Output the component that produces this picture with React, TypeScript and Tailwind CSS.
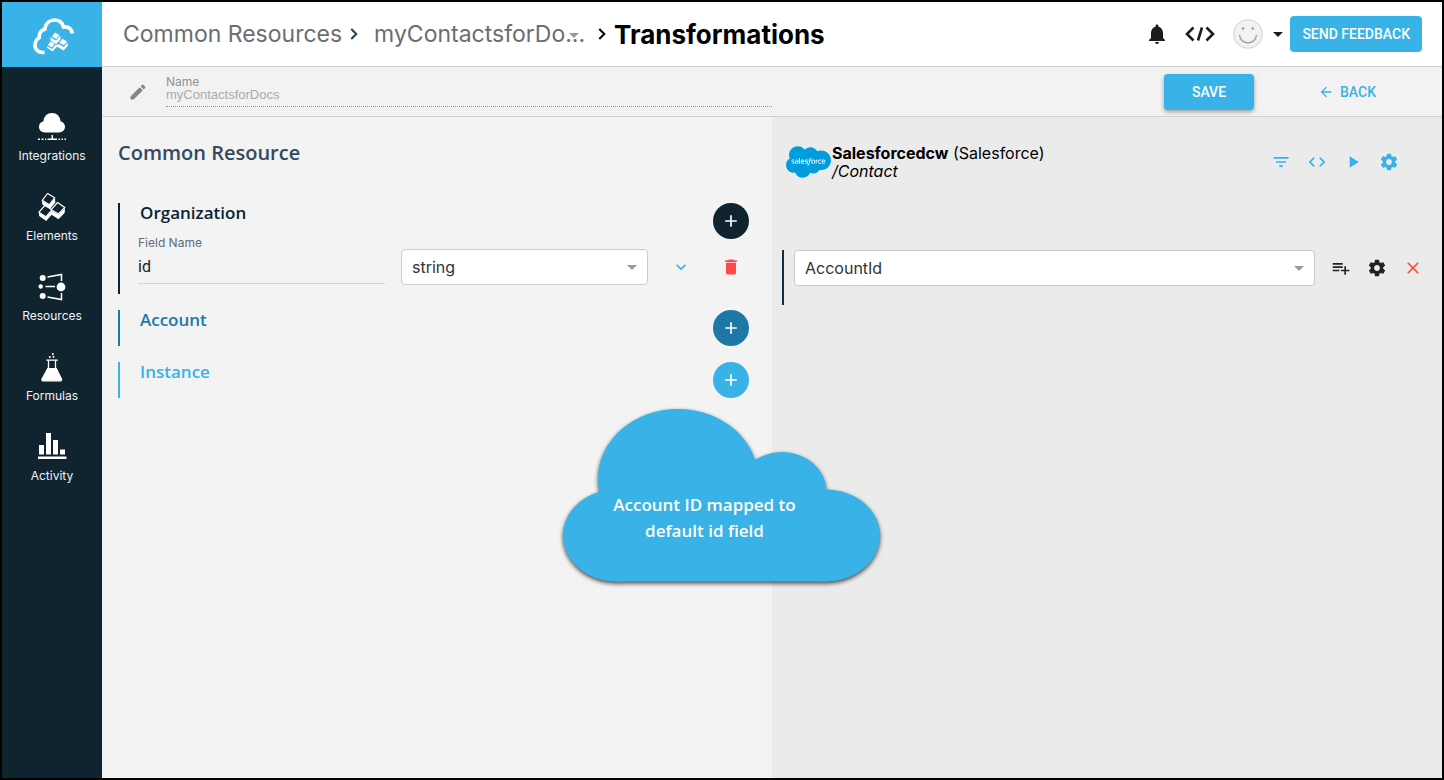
import type { ReactNode } from "react";
import {
  MdAdd,
  MdArrowBack,
  MdArrowDropDown,
  MdClose,
  MdCode,
  MdDelete,
  MdEdit,
  MdExpandMore,
  MdFilterList,
  MdNotifications,
  MdPlayArrow,
} from "react-icons/md";
import { FaSalesforce } from "react-icons/fa";

function BrandLogo() {
  return (
    <svg width="42" height="38" viewBox="0 0 42 38" aria-hidden="true">
      <path
        d="M11.500 34.300C5.500 35.200 1.800 31.500 2 27c.2-4 3-6.500 4.200-7.200C6 14.500 9 12 11.800 11.300 12.500 5 17 2 21.500 2c5 0 8 3 9 7 5-.5 8 2 8.800 6.500"
        fill="none"
        stroke="#fff"
        strokeWidth="3.600"
      />
      <g fill="#fff">
        <path d="M22 14.500l4.300 2.500-3 3.900-4.300-2.500z" />
        <path d="M17.600 19.300l5.500 3.100 4-5 .6 3.600-4.400 5-5.900-3.700z" />
        <path d="M17.800 23.300l4 2.500-2.800 3.600-4.100-2.500z" />
        <path d="M14.200 28l4.900 2.900 3.800-4.700 2.200 1.300-5.600 6-5.400-3.700z" />
        <path d="M29.500 20.700l4.500 2.800-3.200 3.800-4.600-2.800z" />
        <path d="M25.200 25.800l5.600 3.200 3.900-4.700.1 3.500-4.200 4.700-6.800-4z" />
      </g>
    </svg>
  );
}

function IntegrationsIcon() {
  return (
    <svg width="30" height="30" viewBox="0 0 30 30" fill="#fff" aria-hidden="true">
      <path d="M8 20.500C4.300 20.500 2 18 2 14.800c0-2.800 1.700-4.800 4.500-5.500C6.800 4.300 10.300 1 15 1s8.200 3.300 8.500 8.300c2.500.7 4.500 2.800 4.500 5.500 0 3.200-2.500 5.700-6 5.700z" />
      <path d="M14.500 23H16v3.500h-1.500zM10.500 26.500H20V28h-9.500zM1 26.500h2V28H1zM4.500 26.500h2V28h-2zM8 26.500h1.200V28H8zM21.500 26.500H23V28h-1.500zM24.500 26.500H26V28h-1.500zM27.500 26.500H29V28h-1.500z" />
    </svg>
  );
}

function ElementsIcon() {
  return (
    <svg width="30" height="30" viewBox="0 0 30 30" aria-hidden="true">
      <g fill="#fff">
        <path d="M5 8.500l7 4.500 6-7 .3 4.500-5.600 7-7.400-5z" />
        <path d="M1.800 20.500l7 4.700L15 18.500v3.800L9.200 29l-7-5z" />
        <path d="M14 18.500l7.500 4 6.500-6.200-.3 4.500-6.200 6.400-7-4.400z" />
      </g>
      <g fill="#102430" stroke="#fff" strokeWidth="1.200" strokeLinejoin="round">
        <path d="M10.500 1.500l7.200 4.300-5.500 7-7-4.500z" />
        <path d="M7.800 13.500l7.200 4.300-6.200 7-7-4.500z" />
        <path d="M20.500 10.500l7.300 5-6.300 6.500-7.300-4.300z" />
      </g>
    </svg>
  );
}

function ResourcesIcon() {
  return (
    <svg width="30" height="30" viewBox="0 0 30 30" aria-hidden="true">
      <g fill="#fff">
        <circle cx="5.700" cy="6" r="3" />
        <circle cx="3.700" cy="14.500" r="2.200" />
        <circle cx="5.700" cy="24" r="3" />
        <circle cx="24" cy="15" r="4.400" />
      </g>
      <path
        d="M10.500 5L24.500 2.500V9M8.500 14.500h9.500M10.500 25L24.500 27.500V21"
        fill="none"
        stroke="#fff"
        strokeWidth="1.500"
      />
    </svg>
  );
}

function FormulasIcon() {
  return (
    <svg width="30" height="30" viewBox="0 0 30 30" aria-hidden="true">
      <path
        d="M11.500 8.500v7L5 27c-.4.900.1 1.800 1 1.800h17.500c.9 0 1.400-.9 1-1.800L18.500 15.500v-7"
        fill="none"
        stroke="#fff"
        strokeWidth="1.300"
      />
      <path d="M10.500 16h9.200l5 11.500c0 1-.4 1.300-1.200 1.300H6c-.9 0-1.300-.6-1-1.500z" fill="#fff" />
      <path d="M9.300 7.500h11.500v1.300H9.300z" fill="#fff" />
      <circle cx="12.800" cy="5" r="1" fill="#fff" />
      <circle cx="16.500" cy="4.800" r="1" fill="#fff" />
      <circle cx="15.800" cy="2" r="1" fill="#fff" />
    </svg>
  );
}

function ActivityIcon() {
  return (
    <svg width="30" height="30" viewBox="0 0 30 30" fill="#fff" aria-hidden="true">
      <path d="M2 13h5v9.500H2zM9 1h5v21.500H9zM16 8h5v14.500h-5zM23 17.500h5v5h-5zM1 24.500h28.500V27H1z" />
    </svg>
  );
}

function GearIcon() {
  return (
    <svg width="20" height="20" viewBox="0 0 24 24" fill="currentColor" aria-hidden="true">
      <path d="M19.43 12.98c.04-.32.07-.64.07-.98s-.03-.66-.07-.98l2.11-1.65c.19-.15.24-.42.12-.64l-2-3.46c-.12-.22-.39-.3-.61-.22l-2.49 1c-.52-.4-1.08-.73-1.69-.98l-.38-2.65C14.46 2.18 14.25 2 14 2h-4c-.25 0-.46.18-.49.42l-.38 2.65c-.61.25-1.17.59-1.69.98l-2.49-1c-.23-.09-.49 0-.61.22l-2 3.46c-.13.22-.07.49.12.64l2.11 1.65c-.04.32-.07.65-.07.98s.03.66.07.98l-2.11 1.65c-.19.15-.24.42-.12.64l2 3.46c.12.22.39.3.61.22l2.49-1c.52.4 1.08.73 1.69.98l.38 2.65c.03.24.24.42.49.42h4c.25 0 .46-.18.49-.42l.38-2.65c.61-.25 1.17-.59 1.69-.98l2.49 1c.23.09.49 0 .61-.22l2-3.46c.12-.22.07-.49-.12-.64l-2.11-1.65zM12 15.500c-1.930 0-3.500-1.570-3.500-3.500s1.570-3.500 3.500-3.500 3.500 1.570 3.500 3.500-1.570 3.500-3.500 3.500z" />
    </svg>
  );
}

function PlaylistAddIcon() {
  return (
    <svg width="20" height="20" viewBox="0 0 24 24" fill="currentColor" aria-hidden="true">
      <path d="M14 10H2v2h12v-2zm0-4H2v2h12V6zm4 8v-4h-2v4h-4v2h4v4h2v-4h4v-2h-4zM2 16h8v-2H2v2z" />
    </svg>
  );
}

function Chevron() {
  return (
    <svg width="8" height="12" viewBox="0 0 8 12" fill="none" stroke="currentColor" strokeWidth="2" aria-hidden="true">
      <path d="M1.300 1L6.300 6l-5 5" />
    </svg>
  );
}

function CodeTagIcon() {
  return (
    <svg width="30" height="16" viewBox="0 0 30 16" fill="none" stroke="#1c1c1c" strokeWidth="2.600" aria-hidden="true">
      <path d="M8.500 1.500L2 8l6.500 6.500M21.500 1.500L28 8l-6.500 6.500M17 1.500L13 14.500" />
    </svg>
  );
}

function SmileyIcon() {
  return (
    <svg width="30" height="30" viewBox="0 0 30 30" aria-hidden="true">
      <circle cx="15" cy="15" r="14.300" fill="#f2f2f2" stroke="#cfcfcf" />
      <circle cx="10" cy="9.500" r="1.300" fill="#999" />
      <circle cx="19.700" cy="9.500" r="1.300" fill="#999" />
      <path d="M6.500 16c1 10.500 16 10.500 17 0" fill="none" stroke="#999" strokeWidth="1.300" />
    </svg>
  );
}

function IconButton({ label, children }: { label: string; children: ReactNode }) {
  return (
    <button aria-label={label} className="flex size-9 shrink-0 items-center justify-center">
      {children}
    </button>
  );
}

function SelectBox({ label, options }: { label: string; options: string[] }) {
  return (
    <div className="relative min-w-0 flex-1">
      <select
        aria-label={label}
        className="h-9 w-full appearance-none rounded border border-[#ccc] bg-white px-[10px] text-base text-[#333]"
      >
        {options.map((option) => (
          <option key={option}>{option}</option>
        ))}
      </select>
      <MdArrowDropDown className="pointer-events-none absolute top-1.5 right-1 text-[#999]" size={24} />
    </div>
  );
}

const navItems = [
  { label: "Integrations", icon: <IntegrationsIcon /> },
  { label: "Elements", icon: <ElementsIcon /> },
  { label: "Resources", icon: <ResourcesIcon /> },
  { label: "Formulas", icon: <FormulasIcon /> },
  { label: "Activity", icon: <ActivityIcon /> },
];

function Sidebar() {
  return (
    <aside className="w-[100px] shrink-0 bg-[#102430]">
      <a href="#home" aria-label="Home" className="flex h-[65px] items-center justify-center bg-[#39b2e7] pt-1 pl-1">
        <BrandLogo />
      </a>
      <nav className="flex flex-col pt-[45px]">
        {navItems.map((item) => (
          <a
            key={item.label}
            href={"#" + item.label.toLowerCase()}
            className="flex h-20 flex-col items-center gap-1 text-xs leading-5 text-[#eef1f3]"
          >
            {item.icon}
            {item.label}
          </a>
        ))}
      </nav>
    </aside>
  );
}

function TopBar() {
  return (
    <header className="flex h-[65px] items-center border-b border-[#d0d1d3] bg-white pr-5 pl-[21px]">
      <nav aria-label="Breadcrumb" className="flex flex-1 items-center text-[23px] text-[#6b6d70]">
        <a href="#resources">Common Resources</a>
        <span className="mx-2 text-[#263f55]">
          <Chevron />
        </span>
        <div className="relative ml-2">
          <select
            aria-label="Resource"
            className="w-[216px] appearance-none bg-transparent whitespace-nowrap"
          >
            <option>myContactsforDo...</option>
          </select>
          <MdArrowDropDown className="pointer-events-none absolute top-1.5 right-1 text-[#999]" size={24} />
        </div>
        <span className="mx-2 text-black">
          <Chevron />
        </span>
        <h1 className="text-[26px] font-bold text-black">Transformations</h1>
      </nav>
      <div className="flex items-center">
        <button aria-label="Notifications" className="mr-4 text-[#1c1c1c]">
          <MdNotifications size={24} />
        </button>
        <button aria-label="Developer tools" className="mr-[18px]">
          <CodeTagIcon />
        </button>
        <button aria-label="Account menu" className="flex items-center gap-[3px]">
          <SmileyIcon />
          <MdArrowDropDown className="text-[#1c1c1c]" size={24} />
        </button>
        <button className="h-9 rounded-sm bg-[#39b2e7] px-3 font-[Roboto] text-sm font-medium text-white">
          SEND FEEDBACK
        </button>
      </div>
    </header>
  );
}

function NameBar() {
  return (
    <div className="grid h-[50px] grid-cols-2 border-b border-[#d0d1d3] bg-[#f2f2f2]">
      <div className="flex items-center">
        <MdEdit className="mr-[18px] ml-[26px] shrink-0 text-[#7f878e]" size={20} />
        <div className="flex flex-1 flex-col border-b border-dotted border-[#8b9299] pb-1">
          <label htmlFor="name" className="text-xs leading-3 text-[#8b9299]">
            Name
          </label>
          <input
            id="name"
            defaultValue="myContactsforDocs"
            className="w-full bg-transparent font-['Liberation_Sans'] text-[13px] leading-[14px] text-[#aaa]"
          />
        </div>
      </div>
      <div className="flex items-center justify-end pr-[66px] font-[Roboto] text-sm font-medium">
        <button className="mr-16 h-9 w-[90px] rounded-sm bg-[#39b2e7] text-white shadow-[0_2px_4px_rgba(0,0,0,0.35)]">
          SAVE
        </button>
        <button className="flex items-center gap-[6px] text-[#39b2e7]">
          <MdArrowBack size={16} />
          BACK
        </button>
      </div>
    </div>
  );
}

function AddButton({ label, className }: { label: string; className: string }) {
  return (
    <button
      aria-label={label}
      className={"flex size-9 shrink-0 items-center justify-center rounded-full text-white " + className}
    >
      <MdAdd size={20} />
    </button>
  );
}

function ResourcePanel() {
  return (
    <section className="bg-[#f3f3f3] pr-[23px] pl-4">
      <h2 className="h-[86px] pt-[22px] font-['Open_Sans'] text-xl leading-7 font-semibold text-[#34495e]">
        Common Resource
      </h2>
      <div className="flex flex-col gap-4 font-['Open_Sans'] text-[17px] leading-5 font-semibold">
        <div className="h-[91px] border-l-2 border-[#0e2230] pl-[18px] text-[#0e2230]">
          <div className="flex h-9 justify-between pl-[2px]">
            <h3>Organization</h3>
            <AddButton label="Add organization field" className="bg-[#102430]" />
          </div>
          <div className="flex items-start font-[Inter] font-normal">
            <div className="flex h-[45px] flex-1 flex-col border-b border-[#d5d5d5]">
              <label htmlFor="field" className="-mt-1 text-xs leading-4 text-[#5d6b77]">
                Field Name
              </label>
              <input
                id="field"
                defaultValue="id"
                className="mt-1 w-full bg-transparent font-[Roboto] text-base leading-6 text-[#222]"
              />
            </div>
            <div className="ml-4 flex flex-1 pt-[10px]">
              <SelectBox label="Type" options={["string", "number", "boolean"]} />
            </div>
            <button aria-label="Expand field" className="mt-[10px] flex h-9 w-[65px] items-center justify-center text-[#39b2e7]">
              <MdExpandMore size={20} />
            </button>
            <div className="pt-[10px] text-[#ff4a47]">
              <IconButton label="Delete field">
                <MdDelete size={20} />
              </IconButton>
            </div>
          </div>
        </div>
        <div className="flex justify-between border-l-2 border-[#1d78a6] pl-5 text-[#1d78a6]">
          <h3>Account</h3>
          <AddButton label="Add account field" className="bg-[#1d78a6]" />
        </div>
        <div className="flex justify-between border-l-2 border-[#39b2e7] pl-5 text-[#39b2e7]">
          <h3>Instance</h3>
          <AddButton label="Add instance field" className="bg-[#39b2e7]" />
        </div>
      </div>
    </section>
  );
}

function MappingPanel() {
  return (
    <section className="bg-[#ebebeb] pr-[11px] pl-[10px]">
      <div className="flex h-[133px] items-start pt-[27px] pr-6 pl-1">
        <div className="relative mr-[1px] flex h-9 w-[45px] items-center justify-center">
          <div className="absolute inset-x-2 top-3 h-3 bg-white" />
          <FaSalesforce className="relative h-9 w-[45px] text-[#009ddc]" />
        </div>
        <div className="flex-1 text-base leading-[18px] text-black">
          <p>
            <strong>Salesforcedcw</strong> (Salesforce)
          </p>
          <p className="italic">/Contact</p>
        </div>
        <div className="flex text-[#39b2e7]">
          <IconButton label="Filter">
            <MdFilterList size={20} />
          </IconButton>
          <IconButton label="Code">
            <MdCode size={20} />
          </IconButton>
          <IconButton label="Run">
            <MdPlayArrow size={20} />
          </IconButton>
          <IconButton label="Settings">
            <GearIcon />
          </IconButton>
        </div>
      </div>
      <div className="flex h-[55px] items-start border-l-2 border-[#102f42] pl-[10px] text-[#222]">
        <SelectBox label="Mapped field" options={["AccountId", "Name", "Email"]} />
        <div className="ml-2 flex">
          <IconButton label="Add to list">
            <PlaylistAddIcon />
          </IconButton>
          <IconButton label="Field settings">
            <GearIcon />
          </IconButton>
          <span className="text-[#ff4a47]">
            <IconButton label="Remove mapping">
              <MdClose size={20} />
            </IconButton>
          </span>
        </div>
      </div>
    </section>
  );
}

function CloudCallout() {
  return (
    <div className="absolute top-[283px] left-1/2 ml-[-212px] h-[190px] w-[330px]">
      <svg
        className="absolute inset-0 drop-shadow-[0_2px_2px_rgba(0,0,0,0.7)]"
        width="330"
        height="190"
        viewBox="0 0 330 190"
        fill="#39b2e7"
        aria-hidden="true"
      >
        <ellipse cx="118" cy="78.500" rx="80" ry="69.500" />
        <ellipse cx="222" cy="90" rx="44" ry="38" />
        <ellipse cx="56" cy="135.500" rx="53" ry="46" />
        <ellipse cx="266" cy="135.500" rx="54" ry="46" />
        <path d="M56 89h210v92.500H56z" />
      </svg>
      <p className="relative mr-[58px] ml-[17px] pt-[92px] text-center font-['Open_Sans'] text-[17px] leading-[26px] font-semibold text-white">
        Account ID mapped to
        <br />
        default id field
      </p>
    </div>
  );
}

export default function App() {
  return (
    <div className="flex min-h-screen border-2 border-black bg-[#102430] font-[Inter,sans-serif]">
      <Sidebar />
      <div className="flex min-w-0 flex-1 flex-col">
        <TopBar />
        <NameBar />
        <main className="relative grid flex-1 grid-cols-2">
          <ResourcePanel />
          <MappingPanel />
          <CloudCallout />
        </main>
      </div>
    </div>
  );
}
